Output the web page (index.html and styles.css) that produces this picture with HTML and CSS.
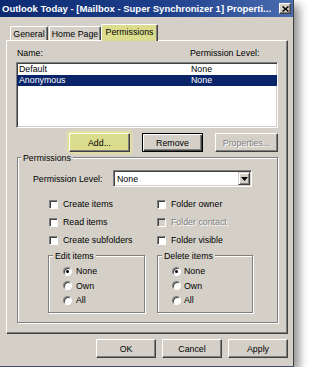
FILE: index.html
```html
<!DOCTYPE html>
<html>
<head>
<meta charset="utf-8">
<title>Properties</title>
<link rel="stylesheet" href="styles.css">
</head>
<body>
<div class="window">
  <div class="titlebar">
    <span class="title">Outlook Today - [Mailbox - Super Synchronizer 1] Properti...</span>
    <span class="close"><svg width="7" height="6" viewBox="0 0 7 6"><path d="M0.5 0.5 L6.5 5.5 M6.5 0.5 L0.5 5.5" stroke="#000" stroke-width="1.5"/></svg></span>
  </div>
  <div class="client">
    <div class="tabs">
      <div class="tab t-general">General</div>
      <div class="tab t-home">Home Page</div>
      <div class="tab t-perm active">Permissions</div>
    </div>
    <div class="panel">
      <div class="list-head"><span class="head-name">Name:</span><span>Permission Level:</span></div>
      <div class="listbox">
        <div class="row"><span class="row-name">Default</span><span>None</span></div>
        <div class="row sel"><span class="row-name">Anonymous</span><span>None</span></div>
      </div>
      <div class="btnrow">
        <div class="btn add">Add...</div>
        <div class="btn default">Remove</div>
        <div class="btn props disabled">Properties...</div>
      </div>
      <div class="group perms">
        <div class="legend perms-legend">Permissions</div>
        <div class="level-row">
          <span class="level-label">Permission Level:</span>
          <div class="select">
            <span class="select-value">None</span>
            <span class="arrow"><svg width="7" height="4" viewBox="0 0 7 4"><path d="M0 0 H7 L3.5 4 Z" fill="#000"/></svg></span>
          </div>
        </div>
        <div class="checks">
          <div class="check"><span class="box"></span>Create items</div>
          <div class="check"><span class="box"></span>Folder owner</div>
          <div class="check"><span class="box"></span>Read items</div>
          <div class="check disabled"><span class="box"></span>Folder contact</div>
          <div class="check"><span class="box"></span>Create subfolders</div>
          <div class="check"><span class="box"></span>Folder visible</div>
        </div>
        <div class="subgroups">
          <div class="group sub edit">
            <div class="legend sub-legend">Edit items</div>
            <div class="radios">
              <div class="radio on"><span class="dot"></span>None</div>
              <div class="radio"><span class="dot"></span>Own</div>
              <div class="radio"><span class="dot"></span>All</div>
            </div>
          </div>
          <div class="group sub del">
            <div class="legend sub-legend">Delete items</div>
            <div class="radios">
              <div class="radio on"><span class="dot"></span>None</div>
              <div class="radio"><span class="dot"></span>Own</div>
              <div class="radio"><span class="dot"></span>All</div>
            </div>
          </div>
        </div>
      </div>
    </div>
    <div class="footer">
      <div class="btn foot">OK</div>
      <div class="btn foot">Cancel</div>
      <div class="btn foot">Apply</div>
    </div>
  </div>
</div>
</body>
</html>
```
FILE: styles.css
```css
html, body {
  margin: 0;
  padding: 0;
  background: #ffffff;
}
body {
  font-family: "Liberation Sans", Arial, sans-serif;
  font-size: 8.8px;
  color: #000;
}
.window {
  width: 293px;
  height: 366px;
  background: #d4d0c8;
  border-right: 1px solid #404040;
  border-bottom: 1px solid #40507a;
  box-shadow: 5px 5px 9px rgba(0, 0, 0, 0.45);
  display: flex;
  flex-direction: column;
}
.titlebar {
  height: 17px;
  background: linear-gradient(90deg, #0c2a72 0%, #1e3f8a 55%, #4a6cb0 100%);
  display: flex;
  align-items: center;
  padding: 0 2px 0 2px;
}
.title {
  flex: 1;
  color: #fff;
  font-weight: bold;
  font-size: 9.5px;
  white-space: nowrap;
  overflow: hidden;
}
.close {
  width: 12px;
  height: 11px;
  box-sizing: border-box;
  background: #d4d0c8;
  border: 1px solid;
  border-color: #fff #404040 #404040 #fff;
  box-shadow: inset -1px -1px #808080;
  display: flex;
  align-items: center;
  justify-content: center;
}
.client {
  flex: 1;
  padding: 7px 5px 0 6px;
  display: flex;
  flex-direction: column;
}
.tabs {
  display: flex;
  align-items: flex-end;
  height: 16px;
  padding-left: 4px;
  position: relative;
  z-index: 1;
}
.tab {
  height: 14px;
  box-sizing: border-box;
  border: 1px solid;
  border-bottom: none;
  border-color: #fff #404040 transparent #fff;
  border-radius: 2px 2px 0 0;
  box-shadow: inset -1px 0 #808080;
  display: flex;
  align-items: center;
  justify-content: center;
  padding-top: 1px;
}
.t-general { width: 38px; margin-right: 1px; }
.t-home { width: 52px; }
.t-perm { width: 57px; }
.tab.active {
  height: 17px;
  margin-bottom: -1px;
  background: #dcdc8e;
  padding-top: 0;
  padding-bottom: 2px;
}
.panel {
  height: 294px;
  box-sizing: border-box;
  border: 1px solid;
  border-color: #fff #404040 #404040 #fff;
  box-shadow: inset -1px -1px #808080;
  padding: 7px 9px 0 9px;
  display: flex;
  flex-direction: column;
}
.list-head {
  display: flex;
  height: 11px;
  line-height: 11px;
  margin-bottom: 3px;
}
.head-name {
  width: 173px;
  padding-left: 1px;
}
.listbox {
  height: 66px;
  box-sizing: border-box;
  background: #fff;
  border: 1px solid;
  border-color: #808080 #fff #fff #808080;
  box-shadow: inset 1px 1px #404040, inset -1px -1px #d4d0c8;
  padding-top: 1px;
}
.row {
  height: 11px;
  line-height: 11px;
  display: flex;
}
.row-name {
  width: 172px;
  padding-left: 2px;
}
.row.sel {
  background: #0a246a;
  color: #fff;
}
.btnrow {
  display: flex;
  justify-content: flex-end;
  gap: 12px;
  margin-top: 5px;
}
.btn {
  width: 61px;
  height: 19px;
  box-sizing: border-box;
  background: #d4d0c8;
  border: 1px solid;
  border-color: #fff #404040 #404040 #fff;
  box-shadow: inset -1px -1px #808080;
  display: flex;
  align-items: center;
  justify-content: center;
}
.btn.props { width: 63px; }
.btn.add {
  background: #dcdc8e;
  box-shadow: inset -1px -1px #808080, 0 0 2px 2px #e2e29c;
}
.btn.default {
  border-color: #000;
  box-shadow: inset 1px 1px #fff, inset -1px -1px #404040, inset -2px -2px #808080;
}
.disabled {
  color: #808080;
  text-shadow: 1px 1px 0 #fff;
}
.group {
  border: 1px solid #808080;
  box-shadow: inset 1px 1px #fff, 1px 1px #fff;
}
.legend {
  align-self: flex-start;
  height: 11px;
  line-height: 11px;
  margin-top: -5px;
  padding: 0 2px;
  background: #d4d0c8;
}
.perms {
  margin: 5px 0 0 1px;
  padding: 0 24px 9px 15px;
  display: flex;
  flex-direction: column;
}
.perms-legend {
  margin-left: -12px;
}
.level-row {
  display: flex;
  align-items: center;
  margin-top: 6px;
  height: 17px;
}
.level-label {
  width: 80px;
}
.select {
  width: 139px;
  height: 17px;
  box-sizing: border-box;
  background: #fff;
  border: 1px solid;
  border-color: #808080 #fff #fff #808080;
  box-shadow: inset 1px 1px #404040, inset -1px -1px #d4d0c8;
  padding: 1px 1px 1px 3px;
  display: flex;
  align-items: center;
}
.select-value {
  flex: 1;
}
.arrow {
  width: 12px;
  height: 13px;
  box-sizing: border-box;
  background: #d4d0c8;
  border: 1px solid;
  border-color: #d4d0c8 #404040 #404040 #d4d0c8;
  box-shadow: inset 1px 1px #fff, inset -1px -1px #808080;
  display: flex;
  align-items: center;
  justify-content: center;
}
.checks {
  display: grid;
  grid-template-columns: 108px auto;
  grid-auto-rows: 18px;
  margin: 8px 0 0 16px;
}
.check {
  display: flex;
  align-items: center;
  gap: 5px;
}
.box {
  width: 9px;
  height: 9px;
  box-sizing: border-box;
  background: #fff;
  border: 1px solid;
  border-color: #808080 #fff #fff #808080;
  box-shadow: inset 1px 1px #404040;
  flex: none;
}
.check.disabled .box {
  background: #d4d0c8;
}
.subgroups {
  display: flex;
  gap: 12px;
  margin: 6px 0 0 15px;
}
.sub {
  height: 58px;
  box-sizing: border-box;
  padding-left: 14px;
  display: flex;
  flex-direction: column;
}
.edit { width: 97px; }
.del { width: 96px; }
.sub-legend {
  margin-left: -10px;
}
.radios {
  margin-top: 2px;
}
.radio {
  height: 14.5px;
  display: flex;
  align-items: center;
  gap: 4px;
}
.del .radio { gap: 3px; }
.dot {
  width: 9px;
  height: 9px;
  box-sizing: border-box;
  border-radius: 50%;
  background: #fff;
  border: 1px solid;
  border-color: #808080 #fff #fff #808080;
  box-shadow: inset 1px 1px #404040;
  display: flex;
  align-items: center;
  justify-content: center;
  flex: none;
}
.radio.on .dot::after {
  content: "";
  width: 3px;
  height: 3px;
  border-radius: 50%;
  background: #000;
}
.footer {
  display: flex;
  justify-content: flex-end;
  gap: 6px;
  padding-top: 5px;
}
.btn.foot { width: 60px; }
```
